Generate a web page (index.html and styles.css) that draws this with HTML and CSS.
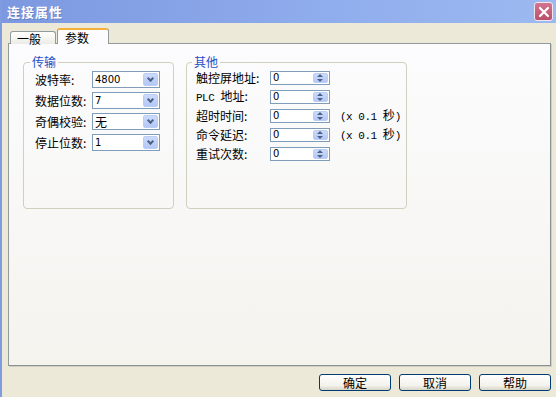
FILE: index.html
```html
<!DOCTYPE html>
<html lang="zh-CN">
<head>
    <meta charset="UTF-8">
    <title>连接属性</title>
    <link rel="stylesheet" href="styles.css">
</head>
<body>

<div class="window">
    <!-- Title bar -->
    <div class="titlebar">
        <span class="title">连接属性</span>
        <span class="close-btn">
            <svg width="12" height="12" viewBox="0 0 12 12"><path d="M2 2 L10 10 M10 2 L2 10" stroke="#fff" stroke-width="2.2" stroke-linecap="round"/></svg>
        </span>
    </div>

    <div class="content">
        <!-- Tabs -->
        <div class="tabs">
            <div class="tab">一般</div>
            <div class="tab active">参数</div>
        </div>

        <div class="panel">
            <fieldset class="group group-left">
                <legend>传输</legend>
                <div class="row">
                    <span class="label">波特率:</span>
                    <div class="combo"><span>4800</span><span class="combo-btn"></span></div>
                </div>
                <div class="row">
                    <span class="label">数据位数:</span>
                    <div class="combo"><span>7</span><span class="combo-btn"></span></div>
                </div>
                <div class="row">
                    <span class="label">奇偶校验:</span>
                    <div class="combo"><span class="cjk">无</span><span class="combo-btn"></span></div>
                </div>
                <div class="row">
                    <span class="label">停止位数:</span>
                    <div class="combo"><span>1</span><span class="combo-btn"></span></div>
                </div>
            </fieldset>

            <fieldset class="group group-right">
                <legend>其他</legend>
                <div class="row">
                    <span class="label wide">触控屏地址:</span>
                    <div class="spin"><span>0</span><span class="spin-btn"></span></div>
                </div>
                <div class="row">
                    <span class="label wide"><span class="latin">PLC </span>地址:</span>
                    <div class="spin"><span>0</span><span class="spin-btn"></span></div>
                </div>
                <div class="row">
                    <span class="label wide">超时时间:</span>
                    <div class="spin"><span>0</span><span class="spin-btn"></span></div>
                    <span class="unit"><span class="latin">(x 0.1 </span>秒<span class="latin">)</span></span>
                </div>
                <div class="row">
                    <span class="label wide">命令延迟:</span>
                    <div class="spin"><span>0</span><span class="spin-btn"></span></div>
                    <span class="unit"><span class="latin">(x 0.1 </span>秒<span class="latin">)</span></span>
                </div>
                <div class="row">
                    <span class="label wide">重试次数:</span>
                    <div class="spin"><span>0</span><span class="spin-btn"></span></div>
                </div>
            </fieldset>
        </div>

        <!-- Dialog buttons -->
        <div class="buttons">
            <button class="btn">确定</button>
            <button class="btn">取消</button>
            <button class="btn">帮助</button>
        </div>
    </div>
</div>

</body>
</html>
```

FILE: styles.css
```css
body {
    margin: 0;
    width: 556px;
    height: 397px;
    background-color: #ece9d8;
    font-family: "Noto Sans CJK SC", sans-serif;
    font-size: 12px;
    line-height: 14px;
    color: #000;
    overflow: hidden;
}

.window {
    height: 397px;
    border-left: 2px solid #7f9ce0;
    box-sizing: border-box;
}

.titlebar {
    height: 23px;
    display: flex;
    align-items: center;
    justify-content: space-between;
    padding: 0 3px 0 5px;
    background: linear-gradient(to right, #7c98e0, #90aded 60%, #9db9f1);
}

.title {
    color: #fff;
    font-weight: bold;
    font-size: 13px;
    letter-spacing: 1px;
    text-shadow: 1px 1px 0 rgba(40, 60, 120, 0.3);
}

.close-btn {
    width: 17px;
    height: 17px;
    display: flex;
    align-items: center;
    justify-content: center;
    background: linear-gradient(#d27590, #bb4f6b);
    border: 1px solid #f0e6ec;
    border-radius: 3px;
}

.content {
    padding: 5px 5px 0 6px;
}

.tabs {
    display: flex;
    align-items: flex-end;
    height: 16px;
    padding-left: 2px;
    margin-bottom: -1px;
    position: relative;
    z-index: 1;
}

.tab {
    width: 38px;
    height: 12px;
    line-height: 13px;
    padding-left: 6px;
    border: 1px solid #919b9c;
    border-bottom: none;
    border-radius: 3px 3px 0 0;
    background: linear-gradient(#ffffff, #ecebe5);
}

.tab.active {
    width: 43px;
    height: 14px;
    line-height: 15px;
    padding-left: 7px;
    border-top: 2px solid #f3b13b;
    background: #fcfcfe;
    margin-left: 1px;
}

.panel {
    height: 323px;
    box-sizing: border-box;
    border: 1px solid #919b9c;
    border-right-color: #8a9192;
    border-bottom-color: #8a9192;
    box-shadow: 1px 1px 0 #d0cfc6;
    background: linear-gradient(#fcfcfe, #f4f3ee);
    display: flex;
    align-items: flex-start;
    gap: 12px;
    padding: 12px 0 0 14px;
}

.group {
    margin: 0;
    border: 1px solid #d0d0bf;
    border-radius: 4px;
    height: 153px;
    padding: 0;
    box-sizing: border-box;
}

.group legend {
    color: #1c4fc8;
    line-height: 12px;
    padding: 0 2px;
}

.group-left {
    width: 151px;
    padding: 3px 0 0 11px;
    display: flex;
    flex-direction: column;
    gap: 4px;
}

.group-left legend {
    margin-left: -5px;
}

.group-right {
    width: 221px;
    padding: 3px 0 0 9px;
    display: flex;
    flex-direction: column;
    gap: 5px;
}

.group-right legend {
    margin-left: -4px;
}

.row {
    display: flex;
    align-items: center;
    height: 17px;
}

.group-right .row {
    height: 14px;
}

.label {
    width: 57px;
    white-space: nowrap;
}

.label.wide {
    width: 74px;
}

.latin {
    font-family: "Liberation Mono", monospace;
    font-size: 11px;
    letter-spacing: -0.5px;
}

.combo,
.spin {
    display: flex;
    align-items: center;
    justify-content: space-between;
    background: #fff;
    border: 1px solid #7f9db9;
    box-sizing: border-box;
    font-family: "DejaVu Sans", sans-serif;
    font-size: 10px;
    padding-left: 2px;
}

.combo {
    width: 68px;
    height: 17px;
}

.combo .cjk {
    font-family: "Noto Sans CJK SC", sans-serif;
    font-size: 12px;
}

.spin {
    width: 60px;
    height: 14px;
}

.combo-btn,
.spin-btn {
    align-self: stretch;
    width: 15px;
    margin: 1px;
    border-radius: 2px;
    background: linear-gradient(#cbdafc, #b4c8f6);
    border: 1px solid #bccdf4;
    box-sizing: border-box;
    position: relative;
}

.combo-btn::after {
    content: "";
    position: absolute;
    left: 4px;
    top: 2px;
    width: 3px;
    height: 3px;
    border-right: 2px solid #4d6185;
    border-bottom: 2px solid #4d6185;
    transform: rotate(45deg);
}

.spin-btn::before,
.spin-btn::after {
    content: "";
    position: absolute;
    left: 3px;
    border-left: 3px solid transparent;
    border-right: 3px solid transparent;
}

.spin-btn::before {
    top: 0;
    border-bottom: 3px solid #4d6185;
}

.spin-btn::after {
    bottom: 0;
    border-top: 3px solid #4d6185;
}

.unit {
    margin-left: 10px;
    white-space: nowrap;
}

.buttons {
    display: flex;
    justify-content: flex-end;
    gap: 8px;
    padding: 8px 0 0 0;
}

.btn {
    width: 72px;
    height: 17px;
    padding: 0;
    border: 1px solid #003c74;
    border-radius: 3px;
    background: linear-gradient(#ffffff, #f3f2ec 70%, #d9d5c6);
    font-family: "Noto Sans CJK SC", sans-serif;
    font-size: 12px;
    line-height: 14px;
    color: #000;
}
```
